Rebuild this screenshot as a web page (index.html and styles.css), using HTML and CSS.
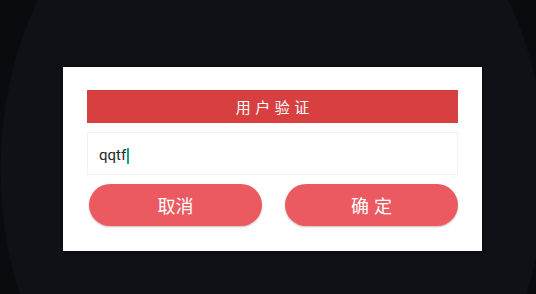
FILE: index.html
```html
<!DOCTYPE html>
<html lang="zh">
<head>
<meta charset="utf-8">
<title>用户验证</title>
<link rel="stylesheet" href="styles.css">
</head>
<body>
<div class="screen">
  <div class="dialog">
    <div class="title">用户验证</div>
    <div class="field"><span class="value">qqtf</span><span class="caret"></span></div>
    <div class="actions">
      <button class="btn">取消</button>
      <button class="btn btn-ok">确定</button>
    </div>
  </div>
</div>
</body>
</html>
```
FILE: styles.css
```css
html, body {
  margin: 0;
  padding: 0;
  width: 536px;
  height: 294px;
  overflow: hidden;
  background: #0a0c0f;
}
.screen {
  width: 536px;
  height: 294px;
  box-sizing: border-box;
  padding: 67px 0 0 63px;
  background: radial-gradient(ellipse 273px 338px at 273px 170px, #0e1115 0, #0e1115 99.5%, #090b0e 100%);
  font-family: "Noto Sans CJK SC", "Noto Sans", sans-serif;
}
.dialog {
  width: 419px;
  height: 184px;
  box-sizing: border-box;
  padding: 23px 24px 0 24px;
  background: #ffffff;
  box-shadow: 0 0 3px rgba(0, 0, 0, 0.6);
}
.title {
  height: 33px;
  background: #d73f41;
  color: #ffffff;
  font-size: 15px;
  line-height: 33px;
  letter-spacing: 4.5px;
  text-indent: 4.5px;
  text-align: center;
}
.field {
  margin-top: 9px;
  height: 43px;
  box-sizing: border-box;
  border: 1px solid #f1f1f1;
  padding-left: 11px;
  display: flex;
  align-items: center;
}
.value {
  font-family: Roboto, "Noto Sans", sans-serif;
  font-size: 15px;
  color: #262626;
  position: relative;
  top: 1px;
}
.caret {
  display: inline-block;
  width: 2px;
  height: 16px;
  background: #14a08f;
  margin-left: 1px;
  position: relative;
  top: 2px;
}
.actions {
  margin-top: 9px;
  padding-left: 2px;
  display: flex;
  gap: 23px;
}
.btn {
  width: 173px;
  height: 42px;
  border: 0;
  border-radius: 21px;
  background: #eb5a60;
  color: #ffffff;
  font-family: "Noto Sans CJK SC", "Noto Sans", sans-serif;
  font-size: 18px;
  line-height: 42px;
  padding: 0;
  box-shadow: 0 1px 2px rgba(120, 60, 60, 0.35);
}
.btn-ok {
  letter-spacing: 5px;
  text-indent: 5px;
}
```
